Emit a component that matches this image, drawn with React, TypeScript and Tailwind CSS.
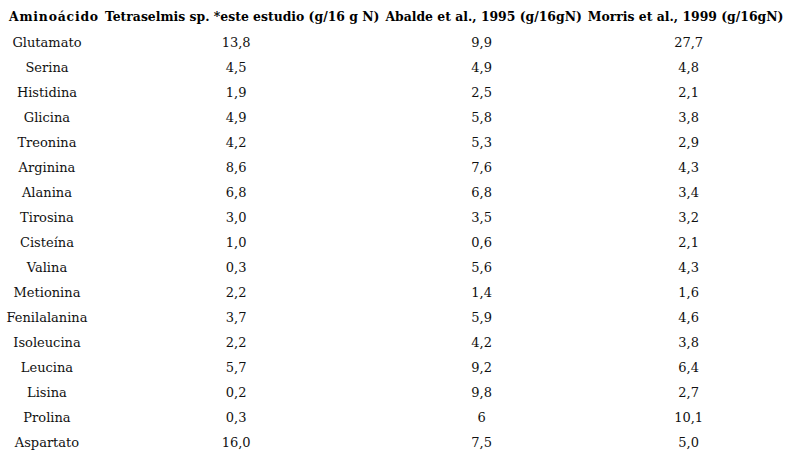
import React from 'react';

const rows: [string, string, string, string][] = [
  ['Glutamato', '13,8', '9,9', '27,7'],
  ['Serina', '4,5', '4,9', '4,8'],
  ['Histidina', '1,9', '2,5', '2,1'],
  ['Glicina', '4,9', '5,8', '3,8'],
  ['Treonina', '4,2', '5,3', '2,9'],
  ['Arginina', '8,6', '7,6', '4,3'],
  ['Alanina', '6,8', '6,8', '3,4'],
  ['Tirosina', '3,0', '3,5', '3,2'],
  ['Cisteína', '1,0', '0,6', '2,1'],
  ['Valina', '0,3', '5,6', '4,3'],
  ['Metionina', '2,2', '1,4', '1,6'],
  ['Fenilalanina', '3,7', '5,9', '4,6'],
  ['Isoleucina', '2,2', '4,2', '3,8'],
  ['Leucina', '5,7', '9,2', '6,4'],
  ['Lisina', '0,2', '9,8', '2,7'],
  ['Prolina', '0,3', '6', '10,1'],
  ['Aspartato', '16,0', '7,5', '5,0'],
];

const headers = [
  'Aminoácido',
  'Tetraselmis sp. *este estudio (g/16 g N)',
  'Abalde et al., 1995 (g/16gN)',
  'Morris et al., 1999 (g/16gN)',
];

// body cells sit a little left of the header centres
const cellPad = ['pl-0 pr-[14px]', 'pl-0 pr-[12px]', 'pl-0 pr-[4px]', 'pl-[6px] pr-0'];

export default function App() {
  return (
    <div className="w-[797px] h-[458px] bg-white text-black overflow-hidden pt-[5px] pl-[6px]">
      <table className="border-separate border-spacing-0 font-['DejaVu_Serif',serif]">
        <thead>
          <tr>
            {headers.map((h, i) => (
              <th
                key={i}
                className={`px-[3px] h-[25px] text-[12.4px] font-bold text-center whitespace-nowrap ${i === 0 ? 'tracking-[0.8px]' : ''}`}
              >
                {h}
              </th>
            ))}
          </tr>
        </thead>
        <tbody>
          {rows.map((r, i) => (
            <tr key={i}>
              {r.map((c, j) => (
                <td key={j} className={`${cellPad[j]} h-[25px] text-[13px] font-light text-center text-[#111]`}>
                  {c}
                </td>
              ))}
            </tr>
          ))}
        </tbody>
      </table>
    </div>
  );
}
